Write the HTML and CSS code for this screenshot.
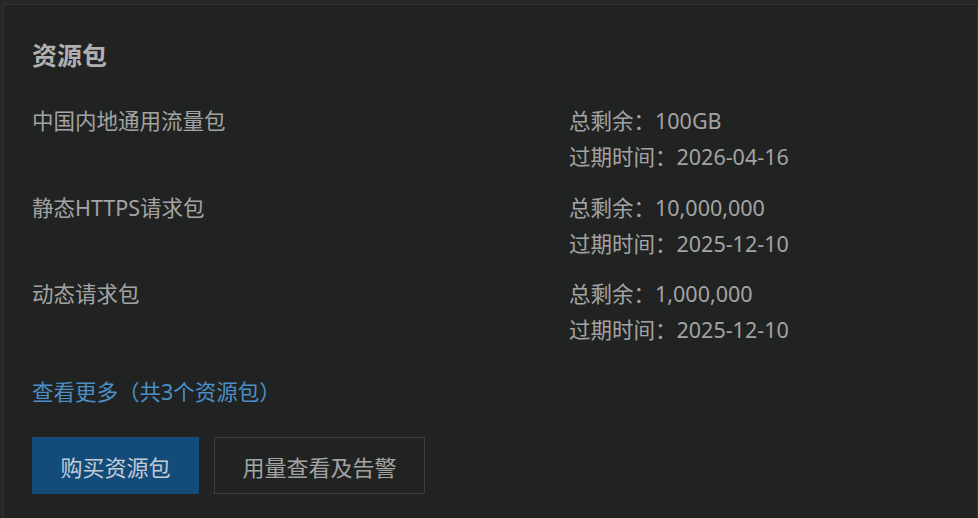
FILE: index.html
```html
<!DOCTYPE html>
<html lang="zh-CN">
<head>
<meta charset="utf-8">
<title>资源包</title>
<link rel="stylesheet" href="styles.css">
</head>
<body>
<section class="card">
  <h2 class="card-title">资源包</h2>
  <div class="pkg-list">
    <div class="pkg-row">
      <div class="pkg-name">中国内地通用流量包</div>
      <div class="pkg-info">
        <div class="pkg-line">总剩余：100GB</div>
        <div class="pkg-line">过期时间：2026-04-16</div>
      </div>
    </div>
    <div class="pkg-row">
      <div class="pkg-name">静态HTTPS请求包</div>
      <div class="pkg-info">
        <div class="pkg-line">总剩余：10,000,000</div>
        <div class="pkg-line">过期时间：2025-12-10</div>
      </div>
    </div>
    <div class="pkg-row">
      <div class="pkg-name">动态请求包</div>
      <div class="pkg-info">
        <div class="pkg-line">总剩余：1,000,000</div>
        <div class="pkg-line">过期时间：2025-12-10</div>
      </div>
    </div>
  </div>
  <a class="more-link" href="#">查看更多（共3个资源包）</a>
  <div class="actions">
    <button class="btn btn-primary" type="button">购买资源包</button>
    <button class="btn btn-default" type="button">用量查看及告警</button>
  </div>
</section>
</body>
</html>
```

FILE: styles.css
```css
html, body {
  margin: 0;
  padding: 0;
  background: #262727;
}

body {
  padding: 4px 0 0 3px;
  font-family: "Noto Sans", "Noto Sans CJK SC", sans-serif;
  color: #a3a3a3;
  font-size: 21.5px;
  overflow: hidden;
}

.card {
  box-sizing: border-box;
  width: 975px;
  height: 514px;
  background: #212322;
  border: 1px solid #323333;
  border-bottom: 0;
  padding: 32px 28px 0 28px;
}

.card-title {
  margin: 0;
  font-size: 25px;
  line-height: 36px;
  font-weight: 700;
  color: #b0b0b0;
}

.pkg-list {
  margin-top: 30px;
  display: flex;
  flex-direction: column;
  gap: 14.5px;
}

.pkg-row {
  display: grid;
  grid-template-columns: 537px 1fr;
}

.pkg-name,
.pkg-line {
  line-height: 36px;
}

.more-link {
  display: block;
  margin-top: 26px;
  line-height: 36px;
  color: #4a8fc6;
  text-decoration: none;
}

.actions {
  margin-top: 27px;
  display: flex;
  gap: 15px;
}

.btn {
  box-sizing: border-box;
  height: 57px;
  padding: 0 27.5px;
  font-family: inherit;
  font-size: 22px;
  border: 1px solid transparent;
  border-radius: 0;
  cursor: pointer;
}

.btn-primary {
  background: #134b7a;
  border-color: #134b7a;
  color: #c4ccd4;
}

.btn-default {
  background: transparent;
  border-color: #3d3e3e;
  color: #a3a3a3;
}
```
